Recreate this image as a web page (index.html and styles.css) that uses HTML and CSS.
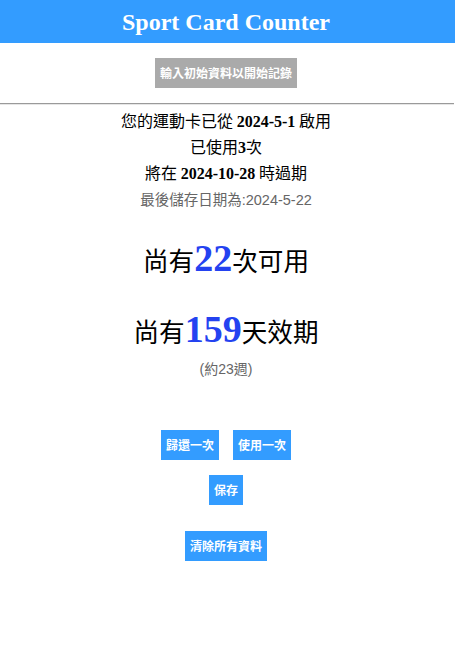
FILE: index.html
```html
<!DOCTYPE html>
<html lang="zh-Hant">
<head>
<meta charset="utf-8">
<title>Sport Card Counter</title>
<link rel="stylesheet" href="styles.css">
</head>
<body>
<header class="topbar"><h1 class="title">Sport Card Counter</h1></header>
<div class="init-row"><button class="btn btn-gray">輸入初始資料以開始記錄</button></div>
<hr class="divider">
<section class="info">
  <p class="line">您的運動卡已從 <b class="num">2024-5-1</b> 啟用</p>
  <p class="line">已使用<b class="num">3</b>次</p>
  <p class="line">將在 <b class="num">2024-10-28</b> 時過期</p>
  <p class="saved">最後儲存日期為:2024-5-22</p>
</section>
<section class="stats">
  <p class="big">尚有<b class="bignum">22</b>次可用</p>
  <p class="big big-second">尚有<b class="bignum">159</b>天效期</p>
  <p class="weeks">(約23週)</p>
</section>
<section class="actions">
  <div class="row"><button class="btn">歸還一次</button><button class="btn">使用一次</button></div>
  <div class="row"><button class="btn">保存</button></div>
  <div class="row row-clear"><button class="btn">清除所有資料</button></div>
</section>
</body>
</html>
```
FILE: styles.css
```css
html, body {
  margin: 0;
  padding: 0;
  background: #fff;
}
body {
  font-family: "Noto Sans CJK TC", "Liberation Sans", sans-serif;
  color: #000;
  text-align: center;
  padding-right: 4px;
}
.topbar {
  background: #339cff;
  height: 43px;
  margin-right: -3px;
  padding-right: 3px;
  display: flex;
  align-items: center;
  justify-content: center;
}
.title {
  margin: 0;
  font-family: "Liberation Serif", serif;
  font-weight: bold;
  font-size: 24px;
  color: #fff;
  line-height: 1;
}
.init-row {
  padding-top: 15px;
  padding-bottom: 15px;
  height: 30px;
}
.btn {
  font-family: "Noto Sans CJK TC", "Liberation Sans", sans-serif;
  font-weight: bold;
  font-size: 12px;
  color: #fff;
  background: #339cff;
  border: none;
  height: 30px;
  padding: 0 5px;
  margin: 0;
  line-height: 30px;
  white-space: nowrap;
  vertical-align: top;
}
.btn-gray {
  background: #aaaaaa;
}
.divider {
  margin: 0 -2px 0 0;
  border: none;
  border-top: 1px solid #9a9a9a;
  border-bottom: 1px solid #e6e6e6;
  height: 0;
}
.info {
  padding-top: 3px;
}
.line {
  margin: 0;
  font-size: 16px;
  line-height: 24px;
}
.num {
  font-family: "Liberation Serif", serif;
  font-size: 16px;
  font-weight: bold;
}
.saved {
  margin: 0;
  font-family: "Liberation Sans", "Noto Sans CJK TC", sans-serif;
  font-size: 14.5px;
  line-height: 28px;
  color: #666;
}
.stats {
  padding-top: 24px;
}
.big {
  margin: 0;
  font-size: 25.6px;
  line-height: 44px;
  height: 44px;
}
.big-second {
  margin-top: 27px;
}
.bignum {
  font-family: "Liberation Serif", serif;
  font-size: 38px;
  font-weight: bold;
  color: #2442f0;
  line-height: 1;
}
.weeks {
  margin: 4px 0 0;
  font-family: "Liberation Sans", "Noto Sans CJK TC", sans-serif;
  font-size: 14px;
  color: #666;
  line-height: 24px;
}
.actions {
  padding-top: 49px;
  display: flex;
  flex-direction: column;
  align-items: center;
  gap: 15px;
}
.row {
  display: flex;
  gap: 14px;
  justify-content: center;
}
.row-clear {
  margin-top: 11px;
}
```
